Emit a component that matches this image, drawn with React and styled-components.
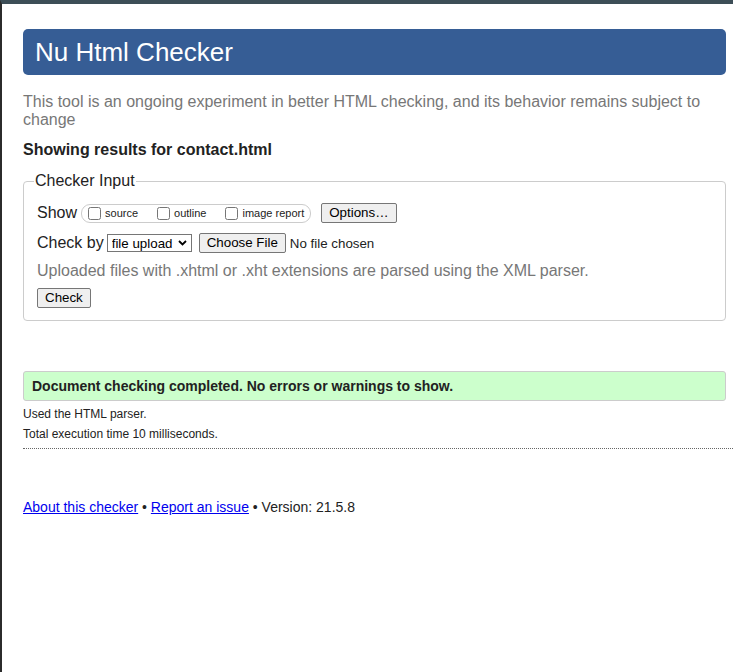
import React from 'react';
import styled, { createGlobalStyle } from 'styled-components';

const GlobalStyle = createGlobalStyle`
  html, body {
    margin: 0;
    padding: 0;
    background: #fff;
  }
  body {
    font-family: 'Liberation Sans', Arial, sans-serif;
    color: #222;
  }
`;

const Page = styled.div`
  box-sizing: border-box;
  min-height: 100vh;
  border-top: 4px solid #3d4e57;
  border-left: 2px solid #2b2b2b;
  padding: 25px 7px 40px 21px;
`;

const Title = styled.h1`
  margin: 0;
  padding: 8px 12px;
  background: #365d95;
  color: #fff;
  font-size: 26px;
  font-weight: normal;
  line-height: 30px;
  border-radius: 5px;
`;

const Intro = styled.p`
  margin: 18px 0 0;
  color: #777;
  font-size: 16px;
  line-height: 18px;
`;

const Showing = styled.p`
  margin: 12px 0 0;
  font-size: 16px;
  font-weight: bold;
  line-height: 18px;
`;

const Fieldset = styled.fieldset`
  margin: 13px 0 0;
  padding: 12px 13px 12px;
  min-width: 0;
  border: 1px solid #ccc;
  border-radius: 4px;
  display: flex;
  flex-direction: column;
  gap: 8px;
`;

const Legend = styled.legend`
  margin-left: -3px;
  padding: 0 1px;
  font-size: 16px;
  line-height: 18px;
`;

const Row = styled.div`
  display: flex;
  align-items: center;
  height: ${(p) => p.$h || 22}px;
`;

const RowLabel = styled.span`
  font-size: 16px;
  margin-right: ${(p) => p.$gap || 4}px;
`;

const Pill = styled.span`
  display: inline-flex;
  align-items: center;
  box-sizing: border-box;
  height: 19px;
  padding: 0 6px 0 6px;
  border: 1px solid #ccc;
  border-radius: 9px;
  margin-right: 10px;
`;

const Choice = styled.label`
  display: inline-flex;
  align-items: center;
  font-size: 11px;
  margin-right: ${(p) => (p.$last ? 0 : 19)}px;
  input {
    width: 13px;
    height: 13px;
    margin: 0 4px 0 0;
  }
`;

const Button = styled.button`
  box-sizing: border-box;
  height: 20px;
  padding: 0 7px;
  font-family: 'Liberation Sans', Arial, sans-serif;
  font-size: 13.333px;
  line-height: 18px;
  color: #000;
  background: #efefef;
  border: 1px solid #767676;
  border-radius: 2px;
`;

const SelectWrap = styled.span`
  display: inline-flex;
  align-items: center;
  margin-right: 7px;
  svg {
    margin: 0 5px 0 -14px;
    pointer-events: none;
  }
`;

const Select = styled.select`
  appearance: none;
  box-sizing: border-box;
  width: 85px;
  height: 18px;
  padding: 0 16px 0 4px;
  font-family: 'Liberation Sans', Arial, sans-serif;
  font-size: 13.333px;
  color: #000;
  background: #fff;
  border: 1px solid #767676;
  border-radius: 0;
`;

const FileName = styled.span`
  margin-left: 4px;
  font-size: 13.333px;
`;

const Hint = styled.span`
  color: #777;
  font-size: 16px;
  line-height: 18px;
`;

const Success = styled.div`
  margin-top: 50px;
  padding: 6px 8px;
  background: #ccffcc;
  border: 1px solid #ccc;
  border-radius: 3px;
  font-size: 14px;
  font-weight: bold;
  line-height: 16px;
`;

const Details = styled.div`
  margin-top: 3px;
  padding-bottom: 4px;
  margin-right: -7px;
  border-bottom: 1px dotted #666;
  p {
    margin: 0;
    font-size: 12px;
    line-height: 20px;
  }
`;

const Footer = styled.p`
  margin: 49px 0 0;
  font-size: 14px;
  line-height: 18px;
  a {
    color: #00e;
  }
`;

export default function App() {
  return (
    <>
      <GlobalStyle />
      <Page>
        <Title>Nu Html Checker</Title>
        <Intro>
          This tool is an ongoing experiment in better HTML checking, and its behavior remains subject to change
        </Intro>
        <Showing>Showing results for contact.html</Showing>
        <Fieldset>
          <Legend>Checker Input</Legend>
          <Row>
            <RowLabel>Show</RowLabel>
            <Pill>
              <Choice>
                <input type="checkbox" />
                source
              </Choice>
              <Choice>
                <input type="checkbox" />
                outline
              </Choice>
              <Choice $last>
                <input type="checkbox" />
                image report
              </Choice>
            </Pill>
            <Button type="button">Options…</Button>
          </Row>
          <Row>
            <RowLabel $gap={3}>Check by</RowLabel>
            <SelectWrap>
              <Select defaultValue="file">
                <option value="file">file upload</option>
              </Select>
              <svg width="9" height="6" viewBox="0 0 9 6">
                <path d="M1 1l3.5 3.5L8 1" fill="none" stroke="#000" strokeWidth="1.8" />
              </svg>
            </SelectWrap>
            <Button type="button">Choose File</Button>
            <FileName>No file chosen</FileName>
          </Row>
          <Row $h={18}>
            <Hint>Uploaded files with .xhtml or .xht extensions are parsed using the XML parser.</Hint>
          </Row>
          <Row $h={20}>
            <Button type="button">Check</Button>
          </Row>
        </Fieldset>
        <Success>Document checking completed. No errors or warnings to show.</Success>
        <Details>
          <p>Used the HTML parser.</p>
          <p>Total execution time 10 milliseconds.</p>
        </Details>
        <Footer>
          <a href="#about">About this checker</a> • <a href="#issue">Report an issue</a> • Version: 21.5.8
        </Footer>
      </Page>
    </>
  );
}
